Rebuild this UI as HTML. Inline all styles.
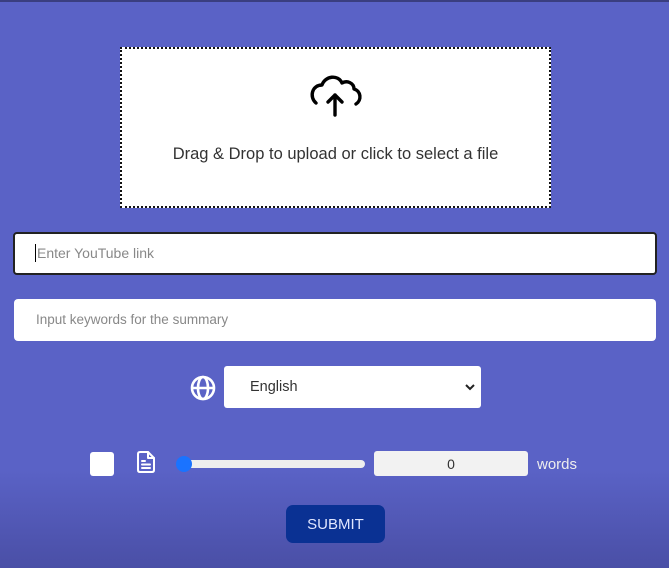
<!DOCTYPE html>
<html><head><style>
body{margin:0;width:669px;height:568px;overflow:hidden;font-family:"Liberation Sans",sans-serif;
background:linear-gradient(to bottom,#5a62c6 0,#5a62c6 470px,#4a4fa6 568px);position:relative}
.a{position:absolute;box-sizing:border-box}
</style></head><body>
<div class="a" style="left:0;top:0;width:669px;height:2px;background:#3a3e80"></div>
<div class="a" style="left:120px;top:47px;width:431px;height:161px;background:#fff;border:2px dotted #111"></div>
<svg class="a" style="left:307px;top:72px" width="56" height="46" viewBox="0 0 56 46" fill="none" stroke="#000" stroke-width="3.4" stroke-linecap="round" stroke-linejoin="round">
<path d="M9 31 C2 25 5 13 15 13 C18 4 31 2 35 11 C40 8 47 11 47 17 C54 19 55 28 49 32"/>
<path d="M28 43 V23 M21 30 L28 23 L35 30"/>
</svg>
<div class="a" style="left:110px;top:145px;width:451px;text-align:center;font-size:16.5px;color:#333">Drag &amp; Drop to upload or click to select a file</div>
<div class="a" style="left:13px;top:232px;width:644px;height:43px;background:#fff;border:2px solid #222;border-radius:4px;padding:11px 0 0 22px;font-size:14px;color:#888">Enter YouTube link</div>
<div class="a" style="left:35px;top:244px;width:1px;height:18px;background:#000"></div>
<div class="a" style="left:14px;top:299px;width:642px;height:42px;background:#fff;border-radius:4px;padding:13px 0 0 22px;font-size:13.5px;color:#888">Input keywords for the summary</div>
<svg class="a" style="left:190px;top:375px" width="26" height="26" viewBox="0 0 26 26" fill="none" stroke="#fff" stroke-width="2.6">
<circle cx="13" cy="13" r="11"/><ellipse cx="13" cy="13" rx="5" ry="11"/><path d="M2 13H24"/></svg>
<div class="a" style="left:224px;top:366px;width:257px;height:42px;background:#fff;border-radius:3px;padding:13px 0 0 26px;font-size:14.5px;color:#333">English</div>
<svg class="a" style="left:465px;top:383px" width="10" height="8" viewBox="0 0 10 8" fill="none" stroke="#222" stroke-width="2"><path d="M1 2L5 6L9 2"/></svg>
<div class="a" style="left:90px;top:452px;width:24px;height:24px;background:#fff;border-radius:3px"></div>
<svg class="a" style="left:135px;top:450px" width="22" height="24" viewBox="0 0 22 24" fill="none" stroke="#fff" stroke-width="2" stroke-linejoin="round" stroke-linecap="round">
<path d="M5 2H13L19 8V20Q19 22 17 22H5Q3 22 3 20V4Q3 2 5 2Z"/><path d="M13 2V8H19"/><path d="M7 11H10M7 14.5H15M7 18H15"/></svg>
<div class="a" style="left:180px;top:460px;width:185px;height:8px;background:#eee;border-radius:4px"></div>
<div class="a" style="left:176px;top:456px;width:16px;height:16px;background:#1a73ff;border-radius:50%"></div>
<div class="a" style="left:374px;top:451px;width:154px;height:25px;background:#f2f2f2;border-radius:3px;text-align:center;padding-top:5px;font-size:14px;color:#333">0</div>
<div class="a" style="left:537px;top:456px;font-size:15px;color:#eee">words</div>
<div class="a" style="left:286px;top:505px;width:99px;height:38px;background:#0a3193;border-radius:7px;text-align:center;padding-top:11px;font-size:15px;color:#e0e6ff">SUBMIT</div>
</body></html>
